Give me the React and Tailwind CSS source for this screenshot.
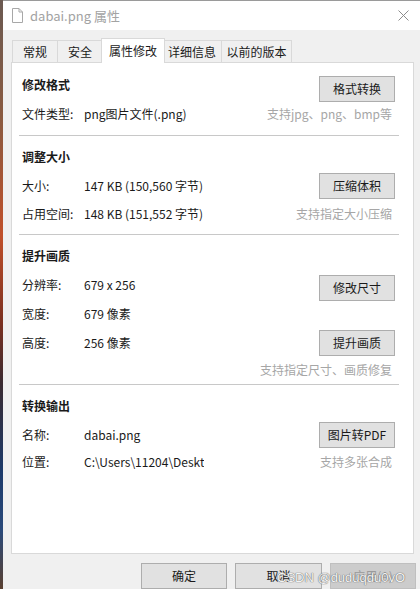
import React from 'react';

const font = { fontFamily: '"Microsoft YaHei", "Noto Sans CJK SC", sans-serif' };

function FileIcon() {
  return (
    <svg width="11" height="15" viewBox="0 0 11 15" className="shrink-0">
      <path d="M0.5 0.5 H7 L10.5 4 V14.5 H0.5 Z" fill="#fff" stroke="#a8a8a8" />
      <path d="M7 0.5 V4 H10.5" fill="none" stroke="#a8a8a8" />
    </svg>
  );
}

function Btn({ children, className = '' }) {
  return (
    <button
      className={`w-[76px] h-[26px] shrink-0 bg-[#e1e1e1] border border-[#adadad] text-[12px] text-[#1a1a1a] flex items-center justify-center ${className}`}
    >
      {children}
    </button>
  );
}

function Row({ label, value, hint, h = 'h-[22px]', className = '' }) {
  return (
    <div className={`flex items-center ${h} ${className}`}>
      <span className="w-[62px] shrink-0">{label}</span>
      <span className="flex-1 whitespace-nowrap overflow-hidden">{value}</span>
      {hint && <span className="text-[#a6a6a6] pr-[3px] whitespace-nowrap">{hint}</span>}
    </div>
  );
}

function Heading({ children }) {
  return <div className="h-[20px] leading-[20px] font-bold">{children}</div>;
}

function Sep() {
  return <div className="h-px bg-[#c8c8c8] -ml-[3px] mr-[-4px]" />;
}

export default function App() {
  const tabs = [
    { t: '常规', w: 'w-[46px]' },
    { t: '安全', w: 'w-[45px]' },
    { t: '属性修改', w: 'w-[64px]', active: true },
    { t: '详细信息', w: 'w-[59px]' },
    { t: '以前的版本', w: 'w-[70px]' },
  ];

  return (
    <div className="flex w-[420px] h-[589px] overflow-hidden text-[12px] text-[#1a1a1a]" style={font}>
      <div className="w-[3px] shrink-0 bg-[linear-gradient(180deg,#6b5a52_0%,#8a5a40_20%,#c0502a_40%,#7a3020_55%,#3a2a30_65%,#1c3a6a_80%,#2a4a7a_90%,#5a4030_100%)]" />
      <div className="flex-1 flex flex-col bg-[#f0f0f0] border-t border-[#9a9a9a] relative">
        {/* title bar */}
        <div className="h-[29px] bg-white flex items-center pl-[9px] pr-[8px]">
          <FileIcon />
          <span className="ml-[7px] text-[13px] text-[#a3a3a3]">dabai.png 属性</span>
          <svg width="11" height="11" viewBox="0 0 11 11" className="ml-auto mr-[3px]">
            <path d="M0.5 0.5 L10.5 10.5 M10.5 0.5 L0.5 10.5" stroke="#8c8c8c" strokeWidth="1" />
          </svg>
        </div>

        {/* tabs */}
        <div className="flex items-end h-[32px] pl-[9px] relative z-10">
          {tabs.map((tab) =>
            tab.active ? (
              <div
                key={tab.t}
                className={`${tab.w} h-[25px] -mx-[2px] mb-[-1px] bg-white border border-b-0 border-[#d9d9d9] flex items-center justify-center relative z-10`}
              >
                {tab.t}
              </div>
            ) : (
              <div
                key={tab.t}
                className={`${tab.w} h-[22px] bg-[#f0f0f0] border border-b-0 border-l-0 first:border-l border-[#d9d9d9] flex items-center justify-center`}
              >
                {tab.t}
              </div>
            )
          )}
        </div>

        {/* panel */}
        <div className="ml-[8px] w-[403px] h-[492px] bg-white border border-[#d9d9d9] pl-[10px] pr-[18px] pt-[12px]">
          {/* section 1 */}
          <div className="flex items-start justify-between h-[28px]">
            <Heading>修改格式</Heading>
            <Btn className="mt-[1px]">格式转换</Btn>
          </div>
          <Row label="文件类型:" value="png图片文件(.png)" hint="支持jpg、png、bmp等" />
          <div className="mt-[10px]">
            <Sep />
          </div>

          {/* section 2 */}
          <div className="mt-[11px]">
            <Heading>调整大小</Heading>
          </div>
          <div className="flex items-center h-[26px] mt-[6px]">
            <span className="w-[62px] shrink-0">大小:</span>
            <span className="flex-1">147 KB (150,560 字节)</span>
            <Btn>压缩体积</Btn>
          </div>
          <Row className="mt-[4px]" label="占用空间:" value="148 KB (151,552 字节)" hint="支持指定大小压缩" />
          <div className="mt-[9px]">
            <Sep />
          </div>

          {/* section 3 */}
          <div className="mt-[11px]">
            <Heading>提升画质</Heading>
          </div>
          <div className="flex items-start h-[26px] mt-[9px]">
            <span className="w-[62px] shrink-0 leading-[20px]">分辨率:</span>
            <span className="flex-1 leading-[20px]">679 x 256</span>
            <Btn>修改尺寸</Btn>
          </div>
          <Row className="mt-[2px]" label="宽度:" value="679 像素" />
          <div className="flex items-center h-[26px] mt-[5px]">
            <span className="w-[62px] shrink-0">高度:</span>
            <span className="flex-1">256 像素</span>
            <Btn>提升画质</Btn>
          </div>
          <div className="h-[20px] mt-[4px] flex items-center justify-end pr-[3px] text-[#a6a6a6]">
            支持指定尺寸、画质修复
          </div>
          <div className="mt-[4px]">
            <Sep />
          </div>

          {/* section 4 */}
          <div className="mt-[11px]">
            <Heading>转换输出</Heading>
          </div>
          <div className="flex items-center h-[26px] mt-[6px]">
            <span className="w-[62px] shrink-0">名称:</span>
            <span className="flex-1">dabai.png</span>
            <Btn>图片转PDF</Btn>
          </div>
          <div className="flex items-center h-[22px] mt-[3px]">
            <span className="w-[62px] shrink-0">位置:</span>
            <span className="w-[120px] whitespace-nowrap overflow-hidden">C:\Users\11204\Desktop</span>
            <span className="ml-auto text-[#a6a6a6] pr-[3px]">支持多张合成</span>
          </div>
        </div>

        {/* footer buttons */}
        <div className="flex justify-end gap-[8px] mt-[9px] pr-[4px]">
          <div className="w-[86px] h-[26px] bg-[#e1e1e1] border border-[#adadad] flex items-center justify-center">确定</div>
          <div className="w-[87px] h-[26px] bg-[#e1e1e1] border border-[#adadad] flex items-center justify-center">取消</div>
          <div className="w-[86px] h-[26px] bg-[#cccccc] border border-[#bfbfbf] flex items-center justify-center text-[#9a9a9a]">
            应用(A)
          </div>
        </div>

        {/* watermark */}
        <div
          className="absolute left-[274px] top-[567px] text-[13px] text-[#f4f4f4] whitespace-nowrap"
          style={{ fontFamily: '"Liberation Sans", "Noto Sans CJK SC", sans-serif', textShadow: '0 0 1px #666, 0 0 1px #666' }}
        >
          CSDN @duduqdu0vO
        </div>
      </div>
    </div>
  );
}
